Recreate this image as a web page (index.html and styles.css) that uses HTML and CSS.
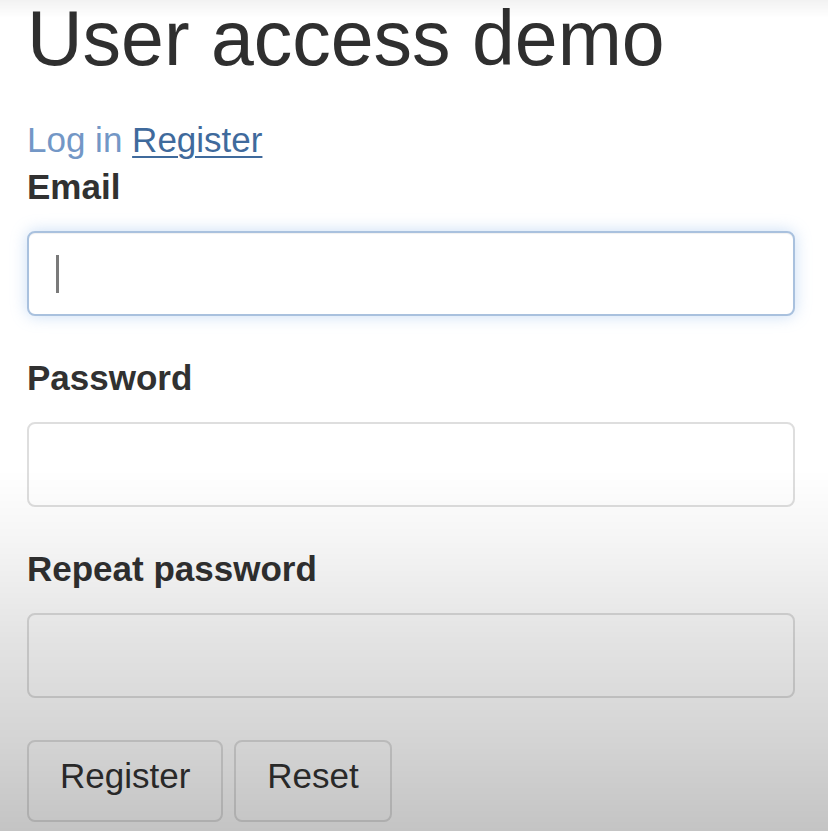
FILE: index.html
```html
<!DOCTYPE html>
<html lang="en">
<head>
<meta charset="utf-8">
<title>User access demo</title>
<link rel="stylesheet" href="styles.css">
</head>
<body>
<div class="page">
  <h1 class="title">User access demo</h1>
  <nav class="nav"><a class="nav-link" href="#">Log in</a> <a class="nav-link active" href="#">Register</a></nav>
  <form class="form">
    <div class="form-group">
      <label class="label" for="email">Email</label>
      <div class="field">
        <input class="input focused" id="email" type="email">
        <span class="caret"></span>
      </div>
    </div>
    <div class="form-group">
      <label class="label" for="pw">Password</label>
      <input class="input" id="pw" type="password">
    </div>
    <div class="form-group">
      <label class="label" for="pw2">Repeat password</label>
      <input class="input" id="pw2" type="password">
    </div>
    <div class="actions">
      <button class="btn" type="button">Register</button>
      <button class="btn" type="button">Reset</button>
    </div>
  </form>
</div>
<div class="vignette"></div>
</body>
</html>
```

FILE: styles.css
```css
html, body {
  margin: 0;
  padding: 0;
  background: #ffffff;
}

body {
  font-family: "Liberation Sans", Arial, sans-serif;
  color: #333333;
  overflow: hidden;
}

.page {
  padding: 0 33px 0 27px;
}

.title {
  margin: 0;
  font-size: 77px;
  line-height: 77px;
  font-weight: 400;
  color: #2f2f2f;
}

.nav {
  margin-top: 43px;
  font-size: 35px;
  line-height: 40px;
}

.nav-link {
  color: #7397c6;
  text-decoration: none;
}

.nav-link.active {
  color: #3f6a9c;
  text-decoration: underline;
  text-decoration-thickness: 2px;
  text-underline-offset: 4px;
}

.form {
  margin-top: 7px;
}

.form-group {
  margin-bottom: 42px;
}

.label {
  display: block;
  font-size: 35px;
  line-height: 40px;
  font-weight: 700;
  color: #313131;
  margin-bottom: 24px;
}

.field {
  position: relative;
}

.input {
  display: block;
  box-sizing: border-box;
  width: 100%;
  height: 85px;
  margin: 0;
  padding: 0 28px;
  border: 2px solid #dedede;
  border-radius: 8px;
  background: #ffffff;
  font: inherit;
  font-size: 35px;
  outline: none;
}

.input.focused {
  border-color: #a9c1de;
  box-shadow: 0 0 16px rgba(120, 170, 230, 0.4), inset 0 1px 1px rgba(0, 0, 0, 0.06);
}

.caret {
  position: absolute;
  left: 29px;
  top: 24px;
  width: 3px;
  height: 38px;
  background: #7a7a7a;
}

.actions {
  display: flex;
  gap: 11px;
}

.btn {
  box-sizing: border-box;
  height: 82px;
  padding: 14px 31px 26px;
  border: 2px solid #e0e0e0;
  border-radius: 8px;
  background: #ffffff;
  font: inherit;
  font-size: 35px;
  line-height: 40px;
  color: #333333;
}

.vignette {
  position: fixed;
  inset: 0;
  pointer-events: none;
  background:
    linear-gradient(to bottom,
      rgba(0, 0, 0, 0.05) 0px,
      rgba(0, 0, 0, 0) 18px,
      rgba(0, 0, 0, 0) 470px,
      rgba(0, 0, 0, 0.04) 540px,
      rgba(0, 0, 0, 0.11) 640px,
      rgba(0, 0, 0, 0.17) 740px,
      rgba(0, 0, 0, 0.23) 831px);
}
```
